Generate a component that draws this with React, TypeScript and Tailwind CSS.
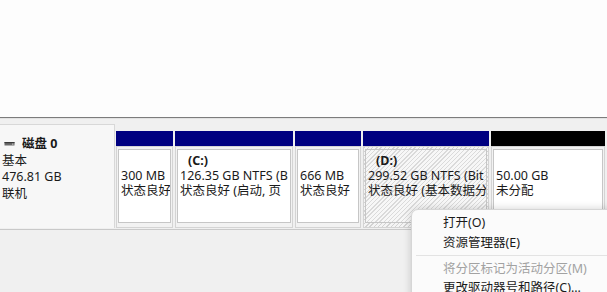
import React from "react";

type Part = {
  w: string;
  bar: string;
  letter?: string;
  l1: string;
  l2: string;
  hatch?: boolean;
};

const parts: Part[] = [
  { w: "w-[57px]", bar: "bg-[#000080]", l1: "300 MB", l2: "状态良好" },
  { w: "w-[118px]", bar: "bg-[#000080]", letter: "(C:)", l1: "126.35 GB NTFS (B", l2: "状态良好 (启动, 页" },
  { w: "w-[66px]", bar: "bg-[#000080]", l1: "666 MB", l2: "状态良好" },
  { w: "w-[126px]", bar: "bg-[#000080]", letter: "(D:)", l1: "299.52 GB NTFS (Bit", l2: "状态良好 (基本数据分", hatch: true },
  { w: "w-[114px]", bar: "bg-[#000000]", l1: "50.00 GB", l2: "未分配" },
];

function DiskIcon() {
  return (
    <svg width="11" height="6" viewBox="0 0 11 6" className="shrink-0">
      <rect x="0.5" y="1" width="10" height="3.5" fill="#6b6b6b" />
      <rect x="0.5" y="1" width="10" height="1.2" fill="#3a3a3a" />
      <rect x="8" y="2.6" width="1.5" height="1" fill="#d0d0d0" />
    </svg>
  );
}

export default function App() {
  return (
    <div className="relative w-[607px] h-[292px] overflow-hidden bg-[#f0f0f0] text-[12.5px] leading-[15px] text-[#1a1a1a] font-['Noto_Sans','Noto_Sans_CJK_SC',sans-serif]">
      {/* top list pane */}
      <div className="h-[118px] bg-[#fdfdfd] border-b border-[#7c7c7c]" />
      <div className="h-[1px] bg-[#e2e2e2]" />

      {/* disk row */}
      <div className="mt-[5px] flex h-[106px] border-b border-[#c9c9c9]">
        <div className="w-[115px] h-[104px] bg-[#f7f7f7] border-t border-r border-[#d8d8d8] pl-[2px] pt-[11px] leading-[16.5px]">
          <div className="flex items-center gap-[7px] pl-[2px]">
            <DiskIcon />
            <span className="font-bold">磁盘 0</span>
          </div>
          <div>基本</div>
          <div>476.81 GB</div>
          <div>联机</div>
        </div>
        <div className="ml-[1px] pt-[7px] flex gap-[2px]">
          {parts.map((p, i) => (
            <div key={i} className={`${p.w} flex flex-col`}>
              <div className={`h-[15px] ${p.bar}`} />
              <div
                className={`h-[82px] border border-[#d4d4d4] px-[1px] pt-[2px] pb-[4px] ${
                  p.hatch
                    ? "bg-[repeating-linear-gradient(135deg,#d2d2d2_0px,#d2d2d2_1px,#f4f4f4_1px,#f4f4f4_3px)]"
                    : "bg-[#f2f2f2]"
                }`}
              >
                <div
                  className={`h-full border border-[#c6c6c6] overflow-hidden whitespace-nowrap pl-[2px] pt-[3px] ${
                    p.hatch
                      ? "bg-[repeating-linear-gradient(135deg,#dadada_0px,#dadada_1px,#f7f7f7_1px,#f7f7f7_3px)]"
                      : "bg-white"
                  }`}
                >
                  <div className="pl-[8px] font-bold h-[15px]">{p.letter ?? ""}</div>
                  <div className="overflow-hidden">{p.l1}</div>
                  <div className="overflow-hidden">{p.l2}</div>
                </div>
              </div>
            </div>
          ))}
        </div>
      </div>

      {/* context menu */}
      <div className="absolute left-[411px] top-[209px] w-[210px] h-[100px] bg-[#fbfbfb] border border-[#d6d6d6] rounded-tl-[7px] shadow-[0_0_8px_rgba(0,0,0,0.18)] pt-[3px]">
        <div className="h-[19.5px] flex items-center pl-[31px]">打开(O)</div>
        <div className="h-[19.5px] flex items-center pl-[31px]">资源管理器(E)</div>
        <div className="my-[3px] mx-[4px] h-[1px] bg-[#e3e3e3]" />
        <div className="h-[19px] flex items-center pl-[31px] text-[#a2a2a2]">将分区标记为活动分区(M)</div>
        <div className="h-[19px] flex items-center pl-[31px]">更改驱动器号和路径(C)...</div>
      </div>
    </div>
  );
}
